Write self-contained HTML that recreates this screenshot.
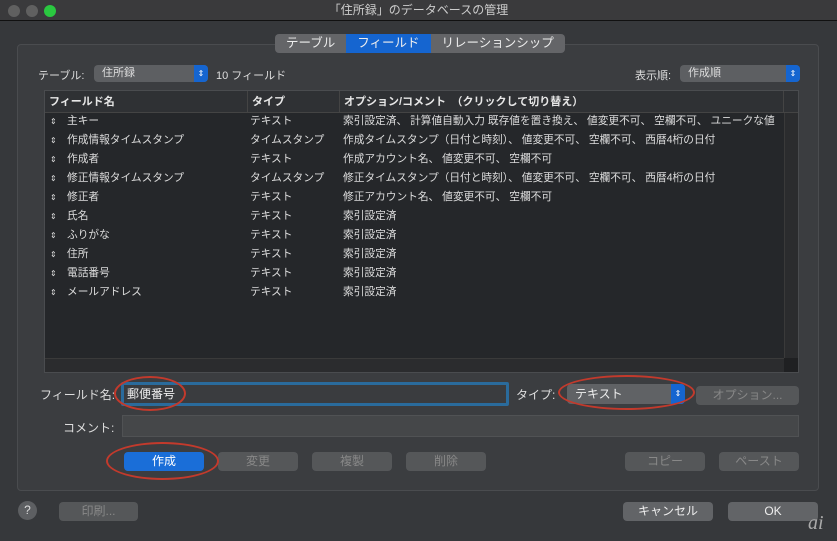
<!DOCTYPE html>
<html><head><meta charset="utf-8"><style>
*{box-sizing:border-box;margin:0;padding:0}
body{width:837px;height:541px;background:#36383b;font-family:"Liberation Sans","Noto Sans CJK JP",sans-serif;color:#ddd;font-size:11px;position:relative;overflow:hidden}
.a{position:absolute}
.title{left:0;top:0;width:837px;height:21px;background:#3a3a3c;border-bottom:1px solid #111;text-align:center;line-height:21px;font-size:12px;color:#ccc}
.dot{width:12px;height:12px;border-radius:50%;top:5px;background:#606060}
.group{left:17px;top:44px;width:802px;height:447px;border:1px solid #4a4c4f;border-radius:4px;background:#3b3d40}
.tabs{left:275px;top:34px;height:19px;display:flex;border-radius:4px;overflow:hidden;background:#646568;font-size:12.5px;color:#eee}
.tabs div{padding:0 11px;line-height:19px}
.pop{height:17px;border-radius:4px;background:#5d5f62;color:#ddd;line-height:17px;padding-left:8px}
.pop .ar{position:absolute;right:0;top:0;width:14px;height:17px;background:#1565d0;border-radius:0 4px 4px 0;font-size:8px;text-align:center;line-height:17px;color:#fff}
.list{left:44px;top:90px;width:755px;height:283px;background:#25272a;border:1px solid #4a4c4f}
.hdr{left:0;top:0;width:753px;height:22px;background:#2f3134;border-bottom:1px solid #444;font-weight:bold;line-height:22px;color:#e6e6e6}
.row{left:0;height:19px;line-height:19px;width:740px;color:#ddd;font-size:10.7px}
.btn{height:19px;border-radius:4px;background:#555759;color:#888;text-align:center;line-height:19px;font-size:12px}
.ov{border:2px solid #c33a2c;border-radius:50%}
</style></head><body>
<div class="a title">「住所録」のデータベースの管理</div>
<div class="a dot" style="left:8px"></div><div class="a dot" style="left:26px"></div><div class="a dot" style="left:44px;background:#2ac840"></div>
<div class="a group"></div>
<div class="a tabs"><div>テーブル</div><div style="background:#1565d0">フィールド</div><div>リレーションシップ</div></div>
<div class="a" style="left:38px;top:67px">テーブル:</div>
<div class="a pop" style="left:94px;top:65px;width:114px">住所録<span class="ar">⇕</span></div>
<div class="a" style="left:216px;top:67px">10 フィールド</div>
<div class="a" style="left:635px;top:67px">表示順:</div>
<div class="a pop" style="left:680px;top:65px;width:120px">作成順<span class="ar">⇕</span></div>
<div class="a list">
<div class="a hdr"><span class="a" style="left:4px">フィールド名</span><span class="a" style="left:202px;border-left:1px solid #444;padding-left:4px;height:22px">タイプ</span><span class="a" style="left:294px;border-left:1px solid #444;padding-left:4px;height:22px">オプション/コメント　（クリックして切り替え）</span><span class="a" style="left:738px;border-left:1px solid #444;height:22px;width:1px"></span></div>
<div class="a" style="left:739px;top:22px;width:14px;height:245px;background:#2b2c2e;border-left:1px solid #3a3a3a"></div>
<div class="a" style="left:0;top:267px;width:753px;height:14px;background:#2b2c2e;border-top:1px solid #3a3a3a"></div>
<div class="a" style="left:739px;top:267px;width:14px;height:14px;background:#1f2022"></div>
</div>
<div class="a" style="left:44px;top:112px;width:740px">
<div class="a row" style="top:0"><span class="a" style="left:6px;font-size:8px">⇕</span><span class="a" style="left:23px">主キー</span><span class="a" style="left:206px">テキスト</span><span class="a" style="left:299px">索引設定済、 計算値自動入力 既存値を置き換え、 値変更不可、 空欄不可、 ユニークな値</span></div>
<div class="a row" style="top:19px"><span class="a" style="left:6px;font-size:8px">⇕</span><span class="a" style="left:23px">作成情報タイムスタンプ</span><span class="a" style="left:206px">タイムスタンプ</span><span class="a" style="left:299px">作成タイムスタンプ（日付と時刻）、 値変更不可、 空欄不可、 西暦4桁の日付</span></div>
<div class="a row" style="top:38px"><span class="a" style="left:6px;font-size:8px">⇕</span><span class="a" style="left:23px">作成者</span><span class="a" style="left:206px">テキスト</span><span class="a" style="left:299px">作成アカウント名、 値変更不可、 空欄不可</span></div>
<div class="a row" style="top:57px"><span class="a" style="left:6px;font-size:8px">⇕</span><span class="a" style="left:23px">修正情報タイムスタンプ</span><span class="a" style="left:206px">タイムスタンプ</span><span class="a" style="left:299px">修正タイムスタンプ（日付と時刻）、 値変更不可、 空欄不可、 西暦4桁の日付</span></div>
<div class="a row" style="top:76px"><span class="a" style="left:6px;font-size:8px">⇕</span><span class="a" style="left:23px">修正者</span><span class="a" style="left:206px">テキスト</span><span class="a" style="left:299px">修正アカウント名、 値変更不可、 空欄不可</span></div>
<div class="a row" style="top:95px"><span class="a" style="left:6px;font-size:8px">⇕</span><span class="a" style="left:23px">氏名</span><span class="a" style="left:206px">テキスト</span><span class="a" style="left:299px">索引設定済</span></div>
<div class="a row" style="top:114px"><span class="a" style="left:6px;font-size:8px">⇕</span><span class="a" style="left:23px">ふりがな</span><span class="a" style="left:206px">テキスト</span><span class="a" style="left:299px">索引設定済</span></div>
<div class="a row" style="top:133px"><span class="a" style="left:6px;font-size:8px">⇕</span><span class="a" style="left:23px">住所</span><span class="a" style="left:206px">テキスト</span><span class="a" style="left:299px">索引設定済</span></div>
<div class="a row" style="top:152px"><span class="a" style="left:6px;font-size:8px">⇕</span><span class="a" style="left:23px">電話番号</span><span class="a" style="left:206px">テキスト</span><span class="a" style="left:299px">索引設定済</span></div>
<div class="a row" style="top:171px"><span class="a" style="left:6px;font-size:8px">⇕</span><span class="a" style="left:23px">メールアドレス</span><span class="a" style="left:206px">テキスト</span><span class="a" style="left:299px">索引設定済</span></div>
</div>
<div class="a" style="left:40px;top:386px;font-size:12px">フィールド名:</div>
<div class="a" style="left:121px;top:382px;width:388px;height:24px;background:#3a3c3f;border:3px solid #2a6b9c;border-radius:2px;font-size:12px;line-height:18px;padding-left:3px;color:#eee">郵便番号</div>
<div class="a" style="left:516px;top:386px;font-size:12px">タイプ:</div>
<div class="a pop" style="left:567px;top:384px;width:118px;height:20px;line-height:20px;font-size:12px;color:#eee;background:#606265">テキスト<span class="ar" style="height:20px;line-height:20px">⇕</span></div>
<div class="a btn" style="left:696px;top:386px;width:103px">オプション...</div>
<div class="a" style="left:63px;top:419px;font-size:12px">コメント:</div>
<div class="a" style="left:122px;top:415px;width:677px;height:22px;background:#454749;border:1px solid #505254"></div>
<div class="a btn" style="left:124px;top:452px;width:80px;background:#1a6ed8;color:#fff">作成</div>
<div class="a btn" style="left:218px;top:452px;width:80px">変更</div>
<div class="a btn" style="left:312px;top:452px;width:80px">複製</div>
<div class="a btn" style="left:406px;top:452px;width:80px">削除</div>
<div class="a btn" style="left:625px;top:452px;width:80px">コピー</div>
<div class="a btn" style="left:719px;top:452px;width:80px">ペースト</div>
<div class="a ov" style="left:114px;top:376px;width:72px;height:35px"></div>
<div class="a ov" style="left:558px;top:375px;width:137px;height:35px"></div>
<div class="a ov" style="left:106px;top:442px;width:113px;height:38px"></div>
<div class="a" style="left:18px;top:501px;width:19px;height:19px;border-radius:50%;background:#5d5f62;text-align:center;line-height:19px;font-size:12px">?</div>
<div class="a btn" style="left:59px;top:502px;width:79px">印刷...</div>
<div class="a btn" style="left:623px;top:502px;width:90px;color:#eee;background:#626467">キャンセル</div>
<div class="a btn" style="left:728px;top:502px;width:90px;color:#eee;background:#626467">OK</div>
<div class="a" style="left:808px;top:512px;font-size:20px;font-style:italic;color:#aaa;font-family:'Liberation Serif',serif">ai</div>
</body></html>
